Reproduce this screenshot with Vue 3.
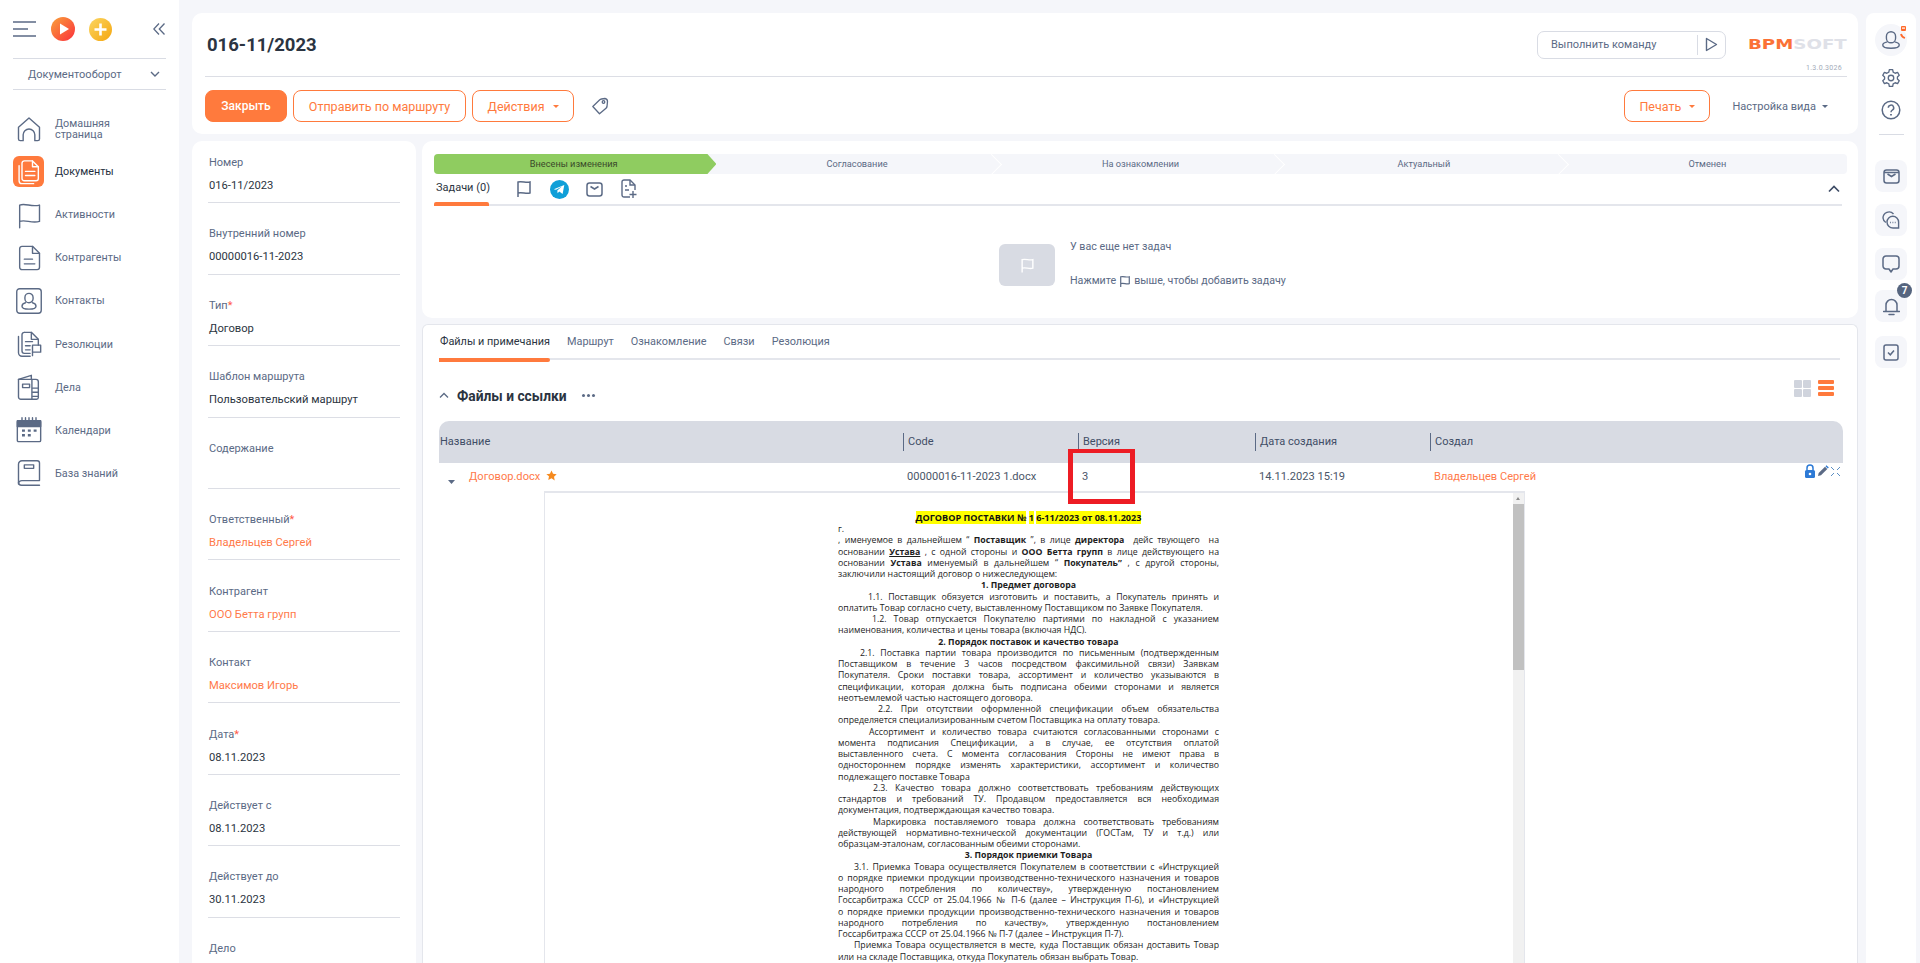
<script setup>
const nav = [
  { label: ['Домашняя', 'страница'], paths: ['M3 20.5V10.5L12 2.5l9 8v10a1.5 1.5 0 0 1-1.5 1.5H17v-5a5 5 0 0 0-10 0v5H4.500A1.500 1.500 0 0 1 3 20.500z'] },
  { label: ['Документы'], active: true, paths: ['M8 2.500h7l5 5v10a2 2 0 0 1-2 2H8a2 2 0 0 1-2-2v-13a2 2 0 0 1 2-2z', 'M15 2.500v5h5', 'M9 11.500h8M9 15h8', 'M3.500 6.500v13a2.500 2.500 0 0 0 2.500 2.500h10'] },
  { label: ['Активности'], paths: ['M4 23V3.500c5-2 10 2 17 0v14c-7 2-12-2-17 0'] },
  { label: ['Контрагенты'], paths: ['M6 2h9l6 6v12a2 2 0 0 1-2 2H6a2 2 0 0 1-2-2V4a2 2 0 0 1 2-2z', 'M15 2v6h6', 'M8 13h7M8 17h9'] },
  { label: ['Контакты'], paths: ['M4 1.500h16a2.500 2.500 0 0 1 2.500 2.500v16a2.500 2.500 0 0 1-2.500 2.500H4A2.500 2.500 0 0 1 1.500 20V4A2.500 2.500 0 0 1 4 1.500z', 'M12 5.500a3.500 3.500 0 0 1 3.500 3.500v1a3.500 3.500 0 0 1-7 0V9A3.500 3.500 0 0 1 12 5.500z', 'M9 13.500c-2 .5-3 1.500-3 3s1.500 2.500 6 2.500 6-1 6-2.500-1-2.500-3-3'] },
  { label: ['Резолюции'], paths: ['M8 2h6l6 6v5', 'M14 2v6h6', 'M8 2a2 2 0 0 0-2 2v14a2 2 0 0 0 2 2h5', 'M3 5.500v14A3 3 0 0 0 6 22.500h7', 'M9 10h6M9 13.500h4M9 17h4', 'M15 22v-9h7v6h-7'] },
  { label: ['Дела'], paths: ['M3 5.500l11-3.500v3', 'M3 5.500h15a2 2 0 0 1 2 2V21a1.500 1.500 0 0 1-1.500 1.500H5A2 2 0 0 1 3 20.500z', 'M6.500 9.500h6v3h-6z', 'M14.500 5.500V22.500', 'M15 13h5M15 16.500h5M15 20h5'] },
  { label: ['Календари'], cal: true, paths: ['M3 4h18a1 1 0 0 1 1 1v16a1 1 0 0 1-1 1H3a1 1 0 0 1-1-1V5a1 1 0 0 1 1-1z', 'M6 1.500V4M9 1.500V4M12 1.500V4M15 1.500V4M18 1.500V4'] },
  { label: ['База знаний'], paths: ['M6 1.500h13A2 2 0 0 1 21 3.500v15H6a3 3 0 0 0-3 3V4.500a3 3 0 0 1 3-3z', 'M3 20a2.500 2.500 0 0 0 2.500 2.500H21', 'M8 5h8v3H8z'] },
]

const fields = [
  { label: 'Номер', value: '016-11/2023' },
  { label: 'Внутренний номер', value: '00000016-11-2023' },
  { label: 'Тип', req: true, value: 'Договор' },
  { label: 'Шаблон маршрута', value: 'Пользовательский маршрут' },
  { label: 'Содержание', value: '' },
  { label: 'Ответственный', req: true, value: 'Владельцев Сергей', link: true },
  { label: 'Контрагент', value: 'ООО Бетта групп', link: true },
  { label: 'Контакт', value: 'Максимов Игорь', link: true },
  { label: 'Дата', req: true, value: '08.11.2023' },
  { label: 'Действует с', value: '08.11.2023' },
  { label: 'Действует до', value: '30.11.2023' },
  { label: 'Дело', value: '' },
]

const stages = ['Внесены изменения', 'Согласование', 'На ознакомлении', 'Актуальный', 'Отменен']
const tabs = ['Файлы и примечания', 'Маршрут', 'Ознакомление', 'Связи', 'Резолюция']
const columns = ['Название', 'Code', 'Версия', 'Дата создания', 'Создал']
const railTop = [
  ['M12 3a5 5 0 0 1 5 5v2a5 5 0 0 1-10 0V8a5 5 0 0 1 5-5z', 'M8 14c-3 .6-5 2-5 3.500C3 19.500 6 21 12 21s9-1.500 9-3.500c0-1.500-2-2.900-5-3.500'],
]

const raw = [
  ['l', 'г.'],
  ['j', ', именуемое в дальнейшем “ *Поставщик* ”, в лице *директора*  дейс твующего  на'],
  ['j', 'основании ~Устава~ , с одной стороны и *ООО Бетта групп* в лице действующего на'],
  ['j', 'основании *Устава* именуемый в дальнейшем “ *Покупатель”* , с другой стороны,'],
  ['l', 'заключили настоящий договор о нижеследующем:'],
  ['c', '1. Предмет договора'],
  ['j', '1.1. Поставщик обязуется изготовить и поставить, а Покупатель принять и', 30],
  ['l', 'оплатить Товар согласно счету, выставленному Поставщиком по Заявке Покупателя.'],
  ['j', '1.2. Товар отпускается Покупателю партиями по накладной с указанием', 34],
  ['l', 'наименования, количества и цены товара (включая НДС).'],
  ['c', '2. Порядок поставок и качество товара'],
  ['j', '2.1. Поставка партии товара производится по письменным (подтвержденным', 22],
  ['j', 'Поставщиком в течение 3 часов посредством факсимильной связи) Заявкам'],
  ['j', 'Покупателя. Сроки поставки товара, ассортимент и количество указываются в'],
  ['j', 'спецификации, которая должна быть подписана обеими сторонами и является'],
  ['l', 'неотъемлемой частью настоящего договора.'],
  ['j', '2.2. При отсутствии оформленной спецификации объем обязательства', 40],
  ['l', 'определяется специализированным счетом Поставщика на оплату товара.'],
  ['j', 'Ассортимент и количество товара считаются согласованными сторонами с', 31],
  ['j', 'момента подписания Спецификации, а в случае, ее отсутствия оплатой'],
  ['j', 'выставленного счета. С момента согласования Стороны не имеют права в'],
  ['j', 'одностороннем порядке изменять характеристики, ассортимент и количество'],
  ['l', 'подлежащего поставке Товара'],
  ['j', '2.3. Качество товара должно соответствовать требованиям действующих', 35],
  ['j', 'стандартов и требований ТУ. Продавцом предоставляется вся необходимая'],
  ['l', 'документация, подтверждающая качество товара.'],
  ['j', 'Маркировка поставляемого товара должна соответствовать требованиям', 35],
  ['j', 'действующей нормативно-технической документации (ГОСТам, ТУ и т.д.) или'],
  ['l', 'образцам-эталонам, согласованным обеими сторонами.'],
  ['c', '3. Порядок приемки Товара'],
  ['j', '3.1. Приемка Товара осуществляется Покупателем в соответствии с «Инструкцией', 16],
  ['j', 'о порядке приемки продукции производственно-технического назначения и товаров'],
  ['j', 'народного потребления по количеству», утвержденную постановлением'],
  ['j', 'Госсарбитража СССР от 25.04.1966 № П-6 (далее – Инструкция П-6), и «Инструкцией'],
  ['j', 'о порядке приемки продукции производственно-технического назначения и товаров'],
  ['j', 'народного потребления по качеству», утвержденную постановлением'],
  ['l', 'Госсарбитража СССР от 25.04.1966 № П-7 (далее – Инструкция П-7).'],
  ['j', 'Приемка Товара осуществляется в месте, куда Поставщик обязан доставить Товар', 16],
  ['l', 'или на складе Поставщика, откуда Покупатель обязан выбрать Товар.'],
]

const docLines = raw.map(([kind, text, indent]) => ({
  kind,
  indent: indent || 0,
  parts: text.split(/(\*[^*]+\*|~[^~]+~)/).filter(Boolean).map((p) => ({
    text: /^[*~]/.test(p) ? p.slice(1, -1) : p,
    cls: p[0] === '*' ? 'b' : p[0] === '~' ? 'b u' : '',
  })),
}))
</script>

<template>
  <div class="page">
    <aside class="side">
      <div class="side-top">
        <svg class="burger" width="23" height="16" viewBox="0 0 23 16"><path d="M0 1h23M0 8h15M0 15h23" stroke="#5b6a85" stroke-width="1.400" fill="none"/></svg>
        <svg width="24" height="24" viewBox="0 0 24 24"><defs><linearGradient id="pl" x1="0" y1="0" x2="1" y2="1"><stop offset="0" stop-color="#f9a23a"/><stop offset="1" stop-color="#fb2f3c"/></linearGradient></defs><circle cx="12" cy="12" r="12" fill="url(#pl)"/><path d="M9 6.500l9 5.500-9 5.500z" fill="#fff"/></svg>
        <svg class="plus" width="23" height="23" viewBox="0 0 23 23"><defs><linearGradient id="pu" x1="0" y1="0" x2="1" y2="1"><stop offset="0" stop-color="#fbd662"/><stop offset="1" stop-color="#f5a60f"/></linearGradient></defs><circle cx="11.500" cy="11.500" r="11.500" fill="url(#pu)"/><path d="M11.500 5.500v12M5.500 11.500h12" stroke="#fff" stroke-width="2.600"/></svg>
        <svg class="collapse" width="12" height="12" viewBox="0 0 12 12"><path d="M6 .5L.8 6 6 11.500M11.500 .5L6.300 6l5.200 5.500" stroke="#5b6a85" stroke-width="1.300" fill="none"/></svg>
      </div>
      <div class="module">
        <span>Документооборот</span>
        <svg width="10" height="6" viewBox="0 0 10 6"><path d="M1 1l4 4 4-4" stroke="#5b6a85" stroke-width="1.400" fill="none"/></svg>
      </div>
      <nav class="nav">
        <div v-for="item in nav" :key="item.label[0]" class="nav-item" :class="{ active: item.active }">
          <span class="nav-icon">
            <svg width="28" height="28" viewBox="0 0 24 24" fill="none" stroke="currentColor" stroke-width="1.200" stroke-linecap="round" stroke-linejoin="round">
              <path v-for="d in item.paths" :key="d" :d="d"/>
              <template v-if="item.cal">
                <path d="M2 4h20v5H2z" fill="currentColor"/>
                <path d="M6 12.500h2.500M11 12.500h2.500M16 12.500h2.500M6 16.500h2.500M11 16.500h2.500" stroke-width="2" stroke-linecap="butt"/>
              </template>
            </svg>
          </span>
          <span class="nav-text"><span v-for="l in item.label" :key="l">{{ l }}</span></span>
        </div>
      </nav>
    </aside>

    <main class="main">
      <section class="top card">
        <header class="top-head">
          <h1>016-11/2023</h1>
          <div class="cmd">
            <span class="cmd-text">Выполнить команду</span>
            <span class="cmd-btn"><svg width="13" height="15" viewBox="0 0 13 15"><path d="M1.500 1.500l10 6-10 6z" fill="none" stroke="#5b6a85" stroke-width="1.400" stroke-linejoin="round"/></svg></span>
          </div>
          <div class="brand">
            <div class="logo"><span class="logo-a">BPM</span><span class="logo-b">SOFT</span></div>
            <div class="ver">1.3.0.3026</div>
          </div>
        </header>
        <div class="toolbar">
          <button class="btn solid">Закрыть</button>
          <button class="btn route">Отправить по маршруту</button>
          <button class="btn acts-btn">Действия<i class="caret"></i></button>
          <svg class="tag" width="18" height="18" viewBox="0 0 18 18" fill="none" stroke="#5b6a85" stroke-width="1.300" stroke-linejoin="round"><path d="M14 1.500a3 3 0 0 1 2.500 3l-.5 5q-.2 1-1 1.700L8.500 16.800 1.800 9.500 8.500 3q.8-.8 2-1z"/><circle cx="12.500" cy="5" r="1.300"/></svg>
          <span class="grow"></span>
          <button class="btn print">Печать<i class="caret"></i></button>
          <span class="view">Настройка вида<i class="caret dark"></i></span>
        </div>
      </section>

      <div class="body">
        <section class="form card">
          <div v-for="f in fields" :key="f.label" class="field">
            <div class="f-label">{{ f.label }}<span v-if="f.req" class="req">*</span></div>
            <div class="f-value" :class="{ link: f.link }">{{ f.value }}</div>
          </div>
        </section>

        <div class="content">
          <section class="tasks card">
            <div class="stages">
              <div v-for="(s, i) in stages" :key="s" class="stage" :class="{ done: i === 0, last: i === 4 }"><span>{{ s }}</span></div>
            </div>
            <div class="task-tabs">
              <span class="task-tab">Задачи (0)</span>
              <svg class="t-flag" width="16" height="18" viewBox="0 0 16 18" fill="none" stroke="#5b6a85" stroke-width="1.500"><path d="M2 17V2c4-1 8 1 12 0v11c-4 1-8-1-12 0"/></svg>
              <svg class="t-tg" width="19" height="21" viewBox="0 0 19 19"><circle cx="9.500" cy="9.500" r="9.500" fill="#0f9fd8"/><path d="M3.800 9.300l10.500-4.200-1.700 9-3.300-2.500-1.700 1.700-.3-2.900 4.600-3.900-5.900 3.300z" fill="#fff"/></svg>
              <svg class="t-mail" width="17" height="15" viewBox="0 0 17 15" fill="none" stroke="#5b6a85" stroke-width="1.500"><rect x="1" y="1" width="15" height="13" rx="2.500"/><path d="M4.500 4.500l4 2.500 4-2.500"/></svg>
              <svg class="t-doc" width="16" height="20" viewBox="0 0 16 20" fill="none" stroke="#5b6a85" stroke-width="1.400"><path d="M9 18H3a2 2 0 0 1-2-2V3a2 2 0 0 1 2-2h6l5 5v5"/><path d="M9 1v5h5M4 7h2M4 11h4M12 12v7M8.500 15.500h7"/></svg>
              <span class="grow"></span>
              <svg class="t-up" width="12" height="8" viewBox="0 0 12 8"><path d="M1 6.500l5-5 5 5" fill="none" stroke="#3f4d66" stroke-width="1.700"/></svg>
            </div>
            <div class="empty">
              <div class="empty-box"><svg width="15" height="15" viewBox="0 0 14 14" fill="none" stroke="#fff" stroke-width="1.300"><path d="M2 13.500V1.500c3.500-1 6.500 1 10 0v8c-3.500 1-6.500-1-10 0"/></svg></div>
              <div class="empty-text">
                <p>У вас еще нет задач</p>
                <p>Нажмите <svg width="12" height="13" viewBox="0 0 14 14" fill="none" stroke="#5b6a85" stroke-width="1.400"><path d="M2 13.500V1.500c3.500-1 6.500 1 10 0v8c-3.500 1-6.500-1-10 0"/></svg> выше, чтобы добавить задачу</p>
              </div>
            </div>
          </section>

          <section class="files card">
            <div class="file-tabs">
              <span v-for="(t, i) in tabs" :key="t" class="file-tab" :class="{ on: i === 0 }">{{ t }}</span>
            </div>
            <div class="sec-head">
              <svg width="10" height="7" viewBox="0 0 10 7"><path d="M1 5.500l4-4 4 4" fill="none" stroke="#5b6a85" stroke-width="1.300"/></svg>
              <h2>Файлы и ссылки</h2>
              <span class="dots"><i></i><i></i><i></i></span>
              <span class="grow"></span>
              <span class="grid-ico"><i></i><i></i><i></i><i></i></span>
              <span class="list-ico"><i></i><i></i><i></i></span>
            </div>
            <div class="table">
              <div class="t-head">
                <span v-for="c in columns" :key="c" class="t-col">{{ c }}</span>
              </div>
              <div class="t-row">
                <span class="name">
                  <svg class="row-caret" width="7" height="4" viewBox="0 0 7 4"><path d="M0 0h7L3.500 4z" fill="#5b6a85"/></svg>
                  <span class="link">Договор.docx</span>
                  <svg class="star" width="11" height="11" viewBox="0 0 24 24"><path d="M12 1l3.400 7.300 7.900 1-5.800 5.500 1.500 7.900L12 17.800l-7 3.900 1.500-7.900L.7 9.300l7.900-1z" fill="#f58a1f"/></svg>
                </span>
                <span>00000016-11-2023 1.docx</span>
                <span>3</span>
                <span>14.11.2023 15:19</span>
                <span class="link">Владельцев Сергей</span>
                <span class="acts">
                  <svg width="12" height="14" viewBox="0 0 12 14"><path d="M3 6V4a3 3 0 0 1 6 0v2" fill="none" stroke="#2d7ad6" stroke-width="1.500"/><rect x="1" y="6" width="10" height="8" rx="1.500" fill="#2d7ad6"/><circle cx="6" cy="10" r="1.300" fill="#fff"/></svg>
                  <svg width="12" height="12" viewBox="0 0 12 12"><path d="M1 11l.7-3L8 1.700 10.300 4 4 10.300z" fill="#5b6a85"/><path d="M8.500 1.200l2.300 2.300 1-1-2.300-2.300z" fill="#2d7ad6"/></svg>
                  <svg width="11" height="11" viewBox="0 0 11 11"><path d="M1 1l3 3M10 1L7 4M1 10l3-3M10 10L7 7" stroke="#5b8fc4" stroke-width="1"/></svg>
                </span>
              </div>
              <div class="preview">
                <div class="sheet">
                  <div class="doc">
                    <div class="doc-title"><span>ДОГОВОР ПОСТАВКИ №</span> <span>1</span> <span>6-11/2023 от 08.11.2023</span></div>
                    <div
                      v-for="(line, i) in docLines"
                      :key="i"
                      class="line"
                      :class="line.kind"
                      :style="{ paddingLeft: line.indent + 'px' }"
                    ><span v-for="(p, k) in line.parts" :key="k" :class="p.cls">{{ p.text }}</span></div>
                  </div>
                </div>
                <div class="scroll">
                  <span class="arrow"></span>
                  <span class="thumb"></span>
                </div>
              </div>
              <div class="mark"></div>
            </div>
          </section>
        </div>
      </div>
    </main>

    <aside class="rail">
      <div class="avatar">
        <svg width="22" height="24" viewBox="0 0 24 24" fill="none" stroke="#5b6a85" stroke-width="1.500"><path v-for="d in railTop[0]" :key="d" :d="d"/></svg>
        <svg class="phone" width="7" height="14" viewBox="0 0 7 14"><rect x="1" y="0" width="5" height="5" rx="1" fill="#ff6a2b"/><rect x="2" y="1.500" width="3" height="1.200" fill="#fff"/><path d="M1 8c.5 2 2 3.500 4 4" fill="none" stroke="#ff6a2b" stroke-width="1.800"/></svg>
      </div>
      <svg class="r-ico" width="20" height="22" viewBox="0 0 24 24" fill="none" stroke="#5b6a85" stroke-width="1.600" stroke-linejoin="round"><path d="M10 2h4l.6 3 2.400 1.300 2.900-1 2 3.400-2.200 2.100v2.400l2.200 2.100-2 3.400-2.900-1L14.600 19 14 22h-4l-.6-3L7 17.700l-2.900 1-2-3.400 2.200-2.100v-2.400L2.100 8.700l2-3.400 2.900 1L9.400 5z"/><circle cx="12" cy="12" r="3.300"/></svg>
      <svg class="r-ico" width="20" height="20" viewBox="0 0 20 20" fill="none" stroke="#5b6a85" stroke-width="1.500"><circle cx="10" cy="10" r="8.800"/><path d="M7.300 7.800a2.700 2.700 0 1 1 4 2.400c-.9.500-1.300 1-1.300 2"/><path d="M10 14v1.500" stroke-width="1.800"/></svg>
      <div class="r-div"></div>
      <div class="r-box"><svg width="17" height="15" viewBox="0 0 17 15" fill="none" stroke="#5b6a85" stroke-width="1.500"><rect x="1" y="1" width="15" height="13" rx="2.500"/><path d="M1 3.500h15" /><path d="M4.500 5l4 2.500 4-2.500"/></svg></div>
      <div class="r-box"><svg width="18" height="18" viewBox="0 0 18 18" fill="none" stroke="#5b6a85" stroke-width="1.400"><path d="M3.800 11.500A6 6 0 0 1 1 7a6 6 0 0 1 10.500-4"/><path d="M5 11a5.800 5.800 0 0 1 11.600 0v6H11a6 6 0 0 1-6-6z"/><path d="M8.200 11.500h.8M10.500 11.500h.8M12.800 11.500h.8" stroke-width="1.300"/></svg></div>
      <div class="r-box"><svg width="18" height="18" viewBox="0 0 18 18" fill="none" stroke="#5b6a85" stroke-width="1.500" stroke-linejoin="round"><path d="M4 1h10a3 3 0 0 1 3 3v7a3 3 0 0 1-3 3h-3l-2 3-2-3H4a3 3 0 0 1-3-3V4a3 3 0 0 1 3-3z"/></svg></div>
      <div class="r-box bell">
        <svg width="17" height="19" viewBox="0 0 17 19" fill="none" stroke="#5b6a85" stroke-width="1.500"><path d="M3 14V8a5.500 5.500 0 0 1 11 0v6M.5 14.500h16M6 17.500h5" stroke-linecap="round"/></svg>
        <span class="badge">7</span>
      </div>
      <div class="r-box check"><svg width="16" height="17" viewBox="0 0 16 17" fill="none" stroke="#5b6a85" stroke-width="1.500"><rect x="1" y="1" width="14" height="15" rx="2"/><path d="M5 8.500l2.300 2.300L11 6.500"/></svg></div>
    </aside>
  </div>
</template>

<style>
html, body { margin: 0; padding: 0; overflow: hidden; background: #f5f6fa; }
</style>

<style scoped>
* { box-sizing: border-box; }
.page { display: flex; width: 1920px; height: 963px; overflow: hidden; background: #f5f6fa; font-family: Roboto, "Noto Sans", sans-serif; font-size: 11px; color: #5b6a85; padding-right: 4px; }
.grow { flex: 1; }
.card { background: #fff; border-radius: 10px; }
.link { color: #ff7a4a; }

.side { width: 179px; flex: none; background: #fff; padding: 0 13px; }
.side-top { display: flex; align-items: center; height: 58px; }
.burger { margin-right: 15px; }
.plus { margin-left: 14px; }
.collapse { margin-left: 41px; }
.module { display: flex; align-items: center; justify-content: space-between; height: 32px; padding: 0 6px 0 15px; border-top: 1px solid #d9dce4; border-bottom: 1px solid #d9dce4; font-size: 11px; color: #5b6a85; }
.nav { margin-top: 17px; }
.nav-item { display: flex; align-items: center; height: 43.1px; }
.nav-icon { width: 31px; height: 31px; flex: none; display: flex; align-items: center; justify-content: center; border-radius: 6px; color: #5b6a85; margin-right: 11px; }
.nav-item.active .nav-icon { background: #ff7a3d; color: #fff; }
.nav-text { display: flex; flex-direction: column; font-size: 10.800px; line-height: 11px; color: #5b6a85; }
.nav-item.active .nav-text { color: #26303f; }

.main { flex: none; width: 1666px; margin-left: 13px; padding-top: 13px; display: flex; flex-direction: column; }
.top { height: 121px; padding: 0 11px 0 13px; }
.top-head { display: flex; height: 64px; border-bottom: 1px solid #dcdee5; align-items: center; }
.top-head h1 { margin: 0; padding-left: 2px; font-size: 18.500px; font-weight: 700; color: #2b3441; flex: 1; line-height: 64px; }
.cmd { display: flex; width: 189px; height: 28px; border: 1px solid #d9dce4; border-radius: 7px; align-items: center; }
.cmd-text { flex: 1; padding-left: 13px; font-size: 11px; color: #5b6a85; }
.cmd-btn { width: 28px; height: 20px; border-left: 1px solid #d9dce4; display: flex; align-items: center; justify-content: center; }
.brand { width: 121px; flex: none; align-self: stretch; padding: 26px 2px 0 22px; display: flex; flex-direction: column; align-items: flex-end; }
.logo { width: 97px; height: 11px; line-height: 11px; font-family: "DejaVu Sans", sans-serif; font-weight: 700; font-size: 14px; white-space: nowrap; transform: scaleX(1.3); transform-origin: left center; }
.logo-a { color: #fb7136; }
.logo-b { color: #dfe1e8; }
.ver { margin-top: 14px; font-size: 7px; line-height: 9px; color: #a3abb9; padding-right: 3px; letter-spacing: .3px; }
.toolbar { display: flex; align-items: center; height: 32px; margin-top: 13px; }
.btn { height: 32px; padding: 0; border: 1px solid #ff7a3d; border-radius: 8px; background: #fff; color: #ff7a3d; font-family: inherit; font-size: 12.500px; display: flex; align-items: center; justify-content: center; margin-right: 6px; }
.btn.solid { background: #ff7a3d; color: #fff; font-weight: 500; width: 82px; font-size: 12px; }
.btn.route { width: 173px; }
.btn.acts-btn { width: 102px; }
.btn.print { width: 86px; margin-right: 22px; }
.caret { display: inline-block; width: 0; height: 0; margin-left: 8px; border: 3px solid transparent; border-top: 3px solid #ff7a3d; border-bottom: 0; }
.caret.dark { border-top-color: #5b6a85; margin-left: 6px; }
.tag { margin-left: 11px; }
.view { font-size: 11px; margin-right: 19px; display: flex; align-items: center; }

.body { display: flex; flex: 1; min-height: 0; margin-top: 7px; gap: 6px; }
.form { width: 224px; flex: none; padding: 14px 16px 0; overflow: hidden; border-radius: 10px 10px 0 0; }
.field { height: 48.300px; margin-bottom: 23.150px; border-bottom: 1px solid #dcdee5; }
.f-label { height: 16px; line-height: 16px; font-size: 11px; color: #5b6a85; padding-left: 1px; }
.req { color: #ff5a4a; }
.f-value { margin-top: 7px; height: 16px; line-height: 16px; font-size: 11.200px; color: #2b3441; padding-left: 1px; white-space: nowrap; }
.f-value.link { color: #ff7a4a; }

.content { width: 1436px; flex: none; display: flex; flex-direction: column; gap: 6px; min-height: 0; }
.tasks { height: 177px; padding: 13px 11px 0 12px; flex: none; }
.stages { display: flex; height: 20px; background: #f5f6fa; border-radius: 4px; }
.stage { flex: 1; position: relative; font-size: 9.200px; line-height: 20px; text-align: center; color: #5b6a85; padding-left: 4px; }
.stage span { position: relative; z-index: 2; }
.stage::after { content: ""; position: absolute; right: -2px; top: 3px; width: 14px; height: 14px; border-top: 1.500px solid #fff; border-right: 1.500px solid #fff; transform: rotate(45deg); z-index: 1; }
.stage.last::after { display: none; }
.stage.done { color: #3a4a2a; padding-left: 0; }
.stage.done::before { content: ""; position: absolute; left: 0; top: 0; bottom: 0; right: -3px; background: #8fcc60; border-radius: 4px 0 0 4px; clip-path: polygon(0 0, calc(100% - 9px) 0, 100% 50%, calc(100% - 9px) 100%, 0 100%); z-index: 1; }
.stage.done::after { display: none; }
.task-tabs { display: flex; align-items: center; height: 32px; border-bottom: 2px solid #e4e6ec; margin-right: 5px; position: relative; }
.task-tab { position: relative; align-self: stretch; width: 55px; padding: 6px 0 0 2px; font-size: 11px; color: #2b3441; white-space: nowrap; line-height: 15px; }
.task-tab::after { content: ""; position: absolute; left: 0; right: 0; bottom: -2px; height: 4px; background: #ff7a3d; border-radius: 2px 2px 0 0; }
.t-flag { margin-left: 27px; }
.t-tg { margin-left: 18px; }
.t-mail { margin-left: 17px; }
.t-doc { margin-left: 18px; }
.t-up { margin-right: 2px; }
.empty { display: flex; margin-top: 38px; margin-left: 565px; }
.empty-box { width: 56px; height: 42px; background: #d8dbe3; border-radius: 6px; display: flex; align-items: center; justify-content: center; }
.empty-text { margin: -4px 0 0 15px; font-size: 10.700px; color: #5b6a85; }
.empty-text p { margin: 0 0 20px; line-height: 14px; display: flex; align-items: center; gap: 3px; height: 14px; }

.files { flex: 1; min-height: 0; border: 1px solid #e4e6ec; border-bottom: 0; border-radius: 6px 6px 0 0; padding: 0 14px 0 16px; overflow: hidden; }
.file-tabs { display: flex; gap: 16px; height: 35px; border-bottom: 2px solid #e4e6ec; margin-right: 3px; }
.file-tab { position: relative; padding: 9px 0 0 1px; line-height: 16px; font-size: 10.900px; color: #5b6a85; height: 35px; }
.file-tab.on { color: #2b3441; }
.file-tab.on::after { content: ""; position: absolute; left: 0; right: 0; bottom: -2px; height: 4px; background: #ff7a3d; border-radius: 0 2px 2px 0; }
.sec-head { display: flex; align-items: center; height: 61px; padding: 0 0 0 0; }
.sec-head svg { margin-top: 10px; }
.sec-head h2 { margin: 10px 0 0 8px; font-size: 13.800px; font-weight: 700; color: #2b3441; }
.dots { display: flex; gap: 2px; margin: 10px 0 0 15px; }
.dots i { width: 3px; height: 3px; border-radius: 50%; background: #5b6a85; }
.grid-ico { display: grid; grid-template-columns: 8px 8px; grid-auto-rows: 8px; gap: 1px; margin: -5px 7px 0 0; }
.grid-ico i { background: #d0d4dd; border-radius: 1px; }
.list-ico { display: flex; flex-direction: column; gap: 2.500px; width: 16px; margin: -5px 9px 0 0; }
.list-ico i { height: 3.500px; background: #ff7a3d; border-radius: 1px; }

.table { position: relative; width: 1404px; }
.t-head { display: grid; grid-template-columns: 464px 175px 177px 175px 1fr; height: 42px; background: #d8dbe3; border-radius: 10px 10px 0 0; align-items: center; }
.t-col { height: 18px; line-height: 18px; font-size: 11px; color: #3f4d66; padding-left: 4px; border-left: 1px solid #5b6a85; }
.t-col:first-child { border-left: 0; padding-left: 1px; }
.t-row { display: grid; grid-template-columns: 464px 175px 177px 175px 1fr; height: 28px; align-items: center; font-size: 11.100px; color: #4a5568; position: relative; margin-top: -1px; }
.t-row > span { padding-left: 4px; }
.t-row > .name { padding-left: 30px; display: flex; align-items: center; gap: 6px; position: relative; }
.row-caret { position: absolute; left: 9px; top: 10px; }
.star { margin-top: -1px; }
.t-row > .acts { position: absolute; right: 2px; top: 2px; display: flex; gap: 1px; align-items: center; padding: 0; }
.preview { display: flex; margin-left: 105px; margin-top: 1px; width: 981px; height: 600px; border-top: 2px solid #e4e6ec; border-left: 1px solid #e4e6ec; border-right: 1px solid #e4e6ec; background: #fff; }
.sheet { flex: 1; padding: 19px 0 0 293px; }
.doc { width: 381px; font-family: "Open Sans", "Noto Sans", sans-serif; font-size: 8.750px; line-height: 11.260px; color: #1d1d1d; }
.doc-title { text-align: center; font-weight: 700; height: 12px; line-height: 12px; font-size: 9.100px; }
.doc-title span { background: #ffff00; color: #111; }
.line { white-space: pre-wrap; height: 11.260px; overflow: hidden; }
.line.j { text-align: justify; text-align-last: justify; }
.line.c { text-align: center; font-weight: 700; }
.line.l { text-align: left; }
.b { font-weight: 700; }
.u { text-decoration: underline; }
.scroll { width: 11px; background: #f1f1f1; position: relative; padding-top: 11px; display: flex; flex-direction: column; align-items: center; }
.arrow { position: absolute; top: 4px; left: 3px; width: 0; height: 0; border: 2.500px solid transparent; border-bottom: 3px solid #8a8a8a; border-top: 0; }
.thumb { width: 11px; height: 166px; background: #c1c1c1; }
.mark { position: absolute; left: 629px; top: 28px; width: 67px; height: 55px; border: 5px solid #ed1c24; border-top-width: 4px; pointer-events: none; }

.rail { flex: none; width: 50px; margin: 13px 0 0 8px; background: #fff; border-radius: 8px 8px 0 0; display: flex; flex-direction: column; align-items: center; }
.avatar { width: 32px; height: 32px; margin-top: 11px; border-radius: 50%; background: #f5f6fa; display: flex; align-items: center; justify-content: center; position: relative; }
.phone { position: absolute; right: 0; top: 2px; }
.r-ico { margin-top: 11px; flex: none; }
.r-div { width: 25px; height: 1px; background: #d9dce4; margin: 14px 0 25px; }
.r-box { width: 32px; height: 32px; background: #f5f6fa; border-radius: 8px; display: flex; align-items: center; justify-content: center; margin-bottom: 12px; position: relative; }
.r-box.bell { margin-top: -2px; margin-bottom: 14px; }
.badge { position: absolute; top: -7px; right: -5px; width: 15px; height: 15px; border-radius: 50%; background: #56657f; color: #fff; font-size: 10px; font-weight: 700; line-height: 15px; text-align: center; }
</style>
